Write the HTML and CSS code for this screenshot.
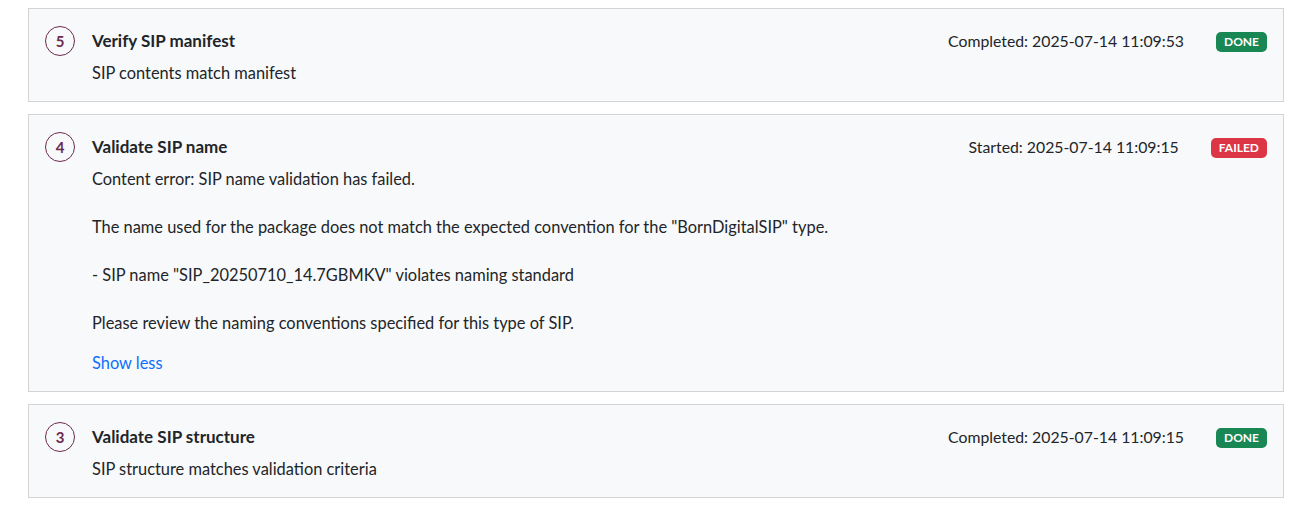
FILE: index.html
```html
<!DOCTYPE html>
<html>
<head>
<meta charset="utf-8">
<link rel="stylesheet" href="styles.css">
</head>
<body>
<div class="steps">
  <div class="step">
    <div class="step-num">5</div>
    <div class="step-main">
      <div class="step-head">
        <div class="step-title">Verify SIP manifest</div>
        <div class="step-meta">
          <span class="step-time">Completed: 2025-07-14 11:09:53</span>
          <span class="badge badge-done">DONE</span>
        </div>
      </div>
      <div class="step-body">
        <p>SIP contents match manifest</p>
      </div>
    </div>
  </div>

  <div class="step">
    <div class="step-num">4</div>
    <div class="step-main">
      <div class="step-head">
        <div class="step-title">Validate SIP name</div>
        <div class="step-meta">
          <span class="step-time">Started: 2025-07-14 11:09:15</span>
          <span class="badge badge-failed">FAILED</span>
        </div>
      </div>
      <div class="step-body">
        <p>Content error: SIP name validation has failed.</p>
        <p>The name used for the package does not match the expected convention for the "BornDigitalSIP" type.</p>
        <p>- SIP name "SIP_20250710_14.7GBMKV" violates naming standard</p>
        <p>Please review the naming conventions specified for this type of SIP.</p>
        <a class="toggle" href="#">Show less</a>
      </div>
    </div>
  </div>

  <div class="step">
    <div class="step-num">3</div>
    <div class="step-main">
      <div class="step-head">
        <div class="step-title">Validate SIP structure</div>
        <div class="step-meta">
          <span class="step-time">Completed: 2025-07-14 11:09:15</span>
          <span class="badge badge-done">DONE</span>
        </div>
      </div>
      <div class="step-body">
        <p>SIP structure matches validation criteria</p>
      </div>
    </div>
  </div>
</div>
</body>
</html>
```

FILE: styles.css
```css
html, body {
  margin: 0;
  padding: 0;
  background: #ffffff;
}
body {
  font-family: Lato, "Noto Sans", sans-serif;
  font-size: 16.4px;
  line-height: 24px;
  color: #212529;
}
.steps {
  display: flex;
  flex-direction: column;
  gap: 12px;
  padding: 8px 22px 0 28px;
}
.step {
  display: flex;
  gap: 17px;
  background: #f8f9fa;
  border: 1px solid #d3d4d5;
  padding: 16px;
}
.step-num {
  flex: 0 0 auto;
  width: 28px;
  height: 28px;
  border: 1px solid #6b2a4e;
  border-radius: 50%;
  display: flex;
  align-items: center;
  justify-content: center;
  font-weight: 700;
  font-size: 15px;
  color: #6b2a4e;
  margin-top: 1px;
}
.step-main {
  flex: 1 1 auto;
}
.step-head {
  display: flex;
  align-items: center;
  justify-content: space-between;
  height: 32px;
}
.step-title {
  font-weight: 700;
  font-size: 17px;
}
.step-meta {
  display: flex;
  align-items: center;
  gap: 32px;
}
.step-time {
  font-size: 15.8px;
}
.badge {
  display: inline-block;
  font-size: 12px;
  font-weight: 700;
  line-height: 20px;
  height: 20px;
  padding: 0 8px;
  border-radius: 5px;
  color: #fff;
  margin-top: 1px;
}
.badge-done {
  background: #198754;
}
.badge-failed {
  background: #dc3545;
}
.step-body {
  margin-top: 4px;
}
.step-body p {
  margin: 0 0 24px;
}
.step-body p:last-of-type {
  margin-bottom: 0;
}
.toggle {
  display: block;
  margin-top: 16px;
  color: #0d6efd;
  text-decoration: none;
}
```
